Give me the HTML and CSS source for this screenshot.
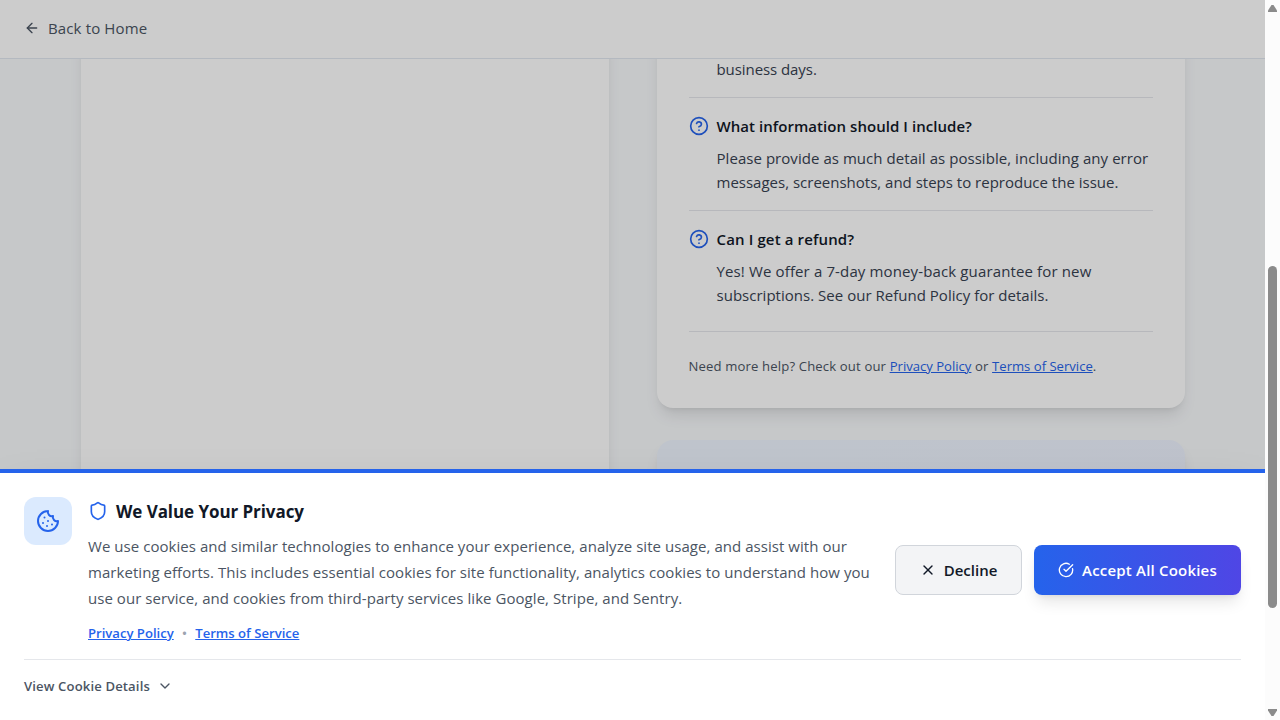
FILE: index.html
```html
<!DOCTYPE html>
<html lang="en">
<head>
<meta charset="utf-8">
<title>Support</title>
<link rel="stylesheet" href="styles.css">
</head>
<body>
<div class="window">
  <div class="page">
    <header class="topbar">
      <svg class="icon" width="16" height="16" viewBox="0 0 24 24"><path d="m12 19-7-7 7-7"/><path d="M19 12H5"/></svg>
      <span class="wide">Back to Home</span>
    </header>
    <main class="columns">
      <section class="card"></section>
      <div class="side">
        <section class="card faq">
          <div class="item">
            <p class="answer"><span class="tight">business days.</span></p>
          </div>
          <div class="item">
            <h3 class="question"><svg class="icon blue" width="20" height="20" viewBox="0 0 24 24"><circle cx="12" cy="12" r="10"/><path d="M9.09 9a3 3 0 0 1 5.83 1c0 2-3 3-3 3"/><path d="M12 17h.01"/></svg><span class="loose">What information should I include?</span></h3>
            <p class="answer"><span class="loose">Please provide as much detail as possible, including any error</span><br>messages, screenshots, and steps to reproduce the issue.</p>
          </div>
          <div class="item">
            <h3 class="question"><svg class="icon blue" width="20" height="20" viewBox="0 0 24 24"><circle cx="12" cy="12" r="10"/><path d="M9.09 9a3 3 0 0 1 5.83 1c0 2-3 3-3 3"/><path d="M12 17h.01"/></svg><span class="wide">Can I get a refund?</span></h3>
            <p class="answer"><span class="wide">Yes! We offer a 7-day money-back guarantee for new</span><br><span class="slight">subscriptions. See our Refund Policy for details.</span></p>
          </div>
          <p class="help">Need more help? Check out our <a href="#">Privacy Policy</a> or <a href="#">Terms of Service</a>.</p>
        </section>
        <section class="card tips"></section>
      </div>
    </main>
    <div class="overlay"></div>
    <aside class="banner">
      <div class="banner-row">
        <div class="intro">
          <div class="badge"><svg class="icon blue" width="24" height="24" viewBox="0 0 24 24"><path d="M12 2a10 10 0 1 0 10 10 4 4 0 0 1-5-5 4 4 0 0 1-5-5"/><path d="M8.5 8.5v.01"/><path d="M16 15.5v.01"/><path d="M12 12v.01"/><path d="M11 17v.01"/><path d="M7 14v.01"/></svg></div>
          <div class="copy">
            <h2 class="title"><svg class="icon blue" width="20" height="20" viewBox="0 0 24 24"><path d="M20 13c0 5-3.5 7.5-7.66 8.95a1 1 0 0 1-.67-.01C7.5 20.5 4 18 4 13V6a1 1 0 0 1 1-1c2 0 4.5-1.2 6.24-2.72a1.17 1.17 0 0 1 1.52 0C14.51 3.81 17 5 19 5a1 1 0 0 1 1 1z"/></svg><span class="title-text">We Value Your Privacy</span></h2>
            <p class="text loose">We use cookies and similar technologies to enhance your experience, analyze site usage, and assist with our<br>marketing efforts. This includes essential cookies for site functionality, analytics cookies to understand how you<br>use our service, and cookies from third-party services like Google, Stripe, and Sentry.</p>
            <div class="links"><a href="#">Privacy Policy</a><span class="dot">•</span><a href="#">Terms of Service</a></div>
          </div>
        </div>
        <div class="actions">
          <button class="btn decline"><svg class="icon" width="16" height="16" viewBox="0 0 24 24"><path d="M18 6 6 18"/><path d="m6 6 12 12"/></svg>Decline</button>
          <button class="btn accept"><svg class="icon" width="16" height="16" viewBox="0 0 24 24"><path d="M21.801 10A10 10 0 1 1 17 3.335"/><path d="m9 11 3 3L22 4"/></svg>Accept All Cookies</button>
        </div>
      </div>
      <div class="details"><span class="wide">View Cookie Details</span><svg class="icon" width="16" height="16" viewBox="0 0 24 24"><path d="m6 9 6 6 6-6"/></svg></div>
    </aside>
  </div>
  <div class="scrollbar">
    <svg width="15" height="720" viewBox="0 0 15 720" fill="#8b8b8b"><path d="M6.5 5H8.500L12 10.500V12H3V10.500Z"/><rect x="3" y="266" width="9" height="342" rx="4.500"/><path d="M3 709H12V710.500L8.500 716H6.500L3 710.500Z"/></svg>
  </div>
</div>
</body>
</html>
```
FILE: styles.css
```css
* { box-sizing: border-box; }
body { margin: 0; font-family: "Segoe UI", "Open Sans", "Noto Sans", sans-serif; font-size: 15px; line-height: 24px; color: #111827; }
h2, h3, p { margin: 0; }
.window { display: flex; width: 1280px; height: 720px; overflow: hidden; }
.page { position: relative; width: 1265px; height: 720px; overflow: hidden; background: #f8fafc; }
.scrollbar { width: 15px; height: 720px; background: #fcfcfc; }
.scrollbar svg { display: block; }
.icon { flex: none; fill: none; stroke: currentColor; stroke-width: 2; stroke-linecap: round; stroke-linejoin: round; }
.blue { color: #2563eb; }

/* Tracking */
.tight { letter-spacing: -0.07px; }
.slight { letter-spacing: 0.02px; }
.loose { letter-spacing: 0.05px; }
.wide { letter-spacing: 0.133px; }

.topbar { position: relative; z-index: 1; display: flex; align-items: center; gap: 8px; height: 59px; padding: 0 24px 2px; background: #fff; border-bottom: 1px solid #e2e8f0; color: #4b5563; }
.columns { display: grid; grid-template-columns: 1fr 1fr; gap: 48px; width: 1152px; height: 720px; margin: -34px auto 0; padding: 0 24px; }
.card { background: #fff; border-radius: 16px; box-shadow: 0 10px 15px -3px rgba(0,0,0,.1), 0 4px 6px -4px rgba(0,0,0,.1); }
.side { display: flex; flex-direction: column; gap: 32px; }
.faq { padding: 32px; }
.item { padding-bottom: 16px; margin-bottom: 16px; border-bottom: 1px solid #e5e7eb; }
.item:nth-child(3) { padding-bottom: 0; margin-bottom: 24px; border-bottom: 0; }
.question { display: flex; align-items: center; gap: 8px; margin-bottom: 8px; font-size: 15px; font-weight: 600; }
.answer { padding-left: 28px; color: #374151; }
.help { padding-top: 24px; border-top: 1px solid #e5e7eb; font-size: 13.1px; line-height: 20px; color: #4b5563; letter-spacing: 0.15px; }
.help a { letter-spacing: 0; }
a { color: #2563eb; text-decoration: underline; }
.tips { height: 300px; background: linear-gradient(135deg, #eff6ff, #eef2ff); }

.overlay { position: absolute; inset: 0; z-index: 2; background: rgba(0,0,0,.2); }
.banner { position: absolute; left: 0; right: 0; bottom: 0; z-index: 3; padding: 24px; background: #fff; border-top: 4px solid #2563eb; box-shadow: 0 25px 50px -12px rgba(0,0,0,.25); }
.banner-row { display: flex; align-items: center; justify-content: space-between; }
.intro { display: flex; gap: 16px; }
.badge { display: grid; place-items: center; width: 48px; height: 48px; border-radius: 12px; background: #dbeafe; }
.title { display: flex; align-items: center; gap: 8px; height: 28px; margin-bottom: 8px; font-size: 17px; line-height: 28px; font-weight: 700; }
.title-text { padding-top: 1px; letter-spacing: -0.07px; }
.text { margin-bottom: 12px; line-height: 26px; color: #4b5563; white-space: nowrap; }
.links { display: flex; gap: 8.3px; font-size: 13.1px; line-height: 20px; font-weight: 600; }
.dot { color: #9ca3af; }
.actions { display: flex; gap: 12px; }
.btn { display: flex; align-items: center; justify-content: center; gap: 8px; height: 50px; border-radius: 8px; font: 600 15px/24px "Segoe UI", "Open Sans", "Noto Sans", sans-serif; padding: 0; }
.decline { width: 127px; border: 1px solid #d1d5db; background: #f3f4f6; color: #111827; }
.accept { width: 207px; border: 0; background: linear-gradient(90deg, #2563eb, #4f46e5); color: #fff; letter-spacing: 0.2px; box-shadow: 0 10px 15px -3px rgba(0,0,0,.1), 0 4px 6px -4px rgba(0,0,0,.1); }
.details { display: flex; align-items: center; gap: 7px; margin-top: 16px; padding-top: 16px; border-top: 1px solid #e5e7eb; font-size: 13.1px; line-height: 20px; font-weight: 600; color: #4b5563; }
```
